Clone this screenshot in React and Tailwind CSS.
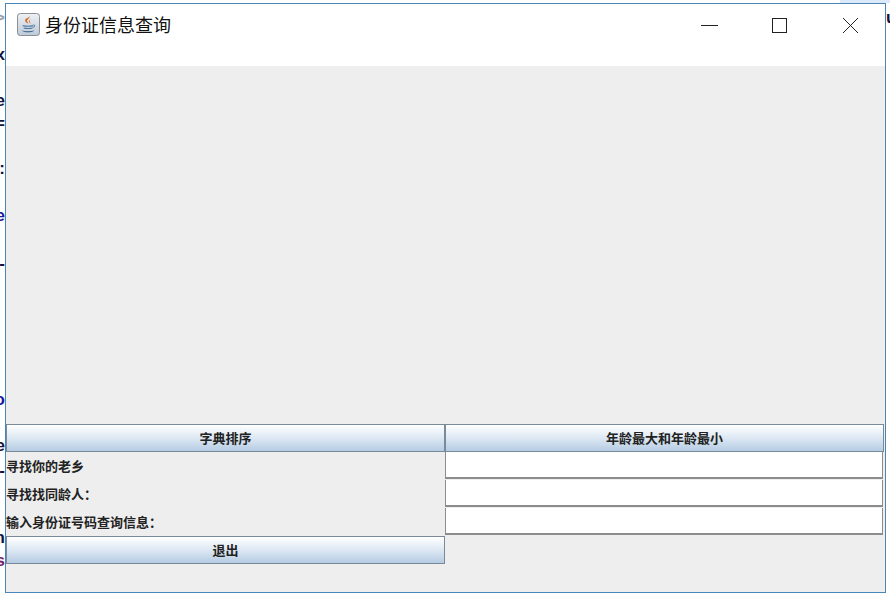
import React from 'react';

const font = { fontFamily: '"Noto Sans CJK SC", "Liberation Sans", sans-serif' };

// letters of the page behind the window, only a sliver of them shows
const behind = [
  ['>', 'top-[9px]', 'text-gray-400'],
  ['x', 'top-[46px]', 'text-[#14143c]'],
  ['e', 'top-[92px]', 'text-[#14143c]'],
  ['=', 'top-[115px]', 'text-[#14143c]'],
  [':', 'top-[160px]', 'text-[#14143c]'],
  ['e', 'top-[207px]', 'text-[#1a1aa0]'],
  ['-', 'top-[255px]', 'text-[#14143c]'],
  ['o', 'top-[391px]', 'text-[#1a1aa0]'],
  ['e', 'top-[437px]', 'text-[#14143c]'],
  ['-', 'top-[462px]', 'text-[#14143c]'],
  ['n', 'top-[529px]', 'text-[#14143c]'],
  ['s', 'top-[552px]', 'text-[#7a1a6a]'],
];

const JavaIcon = () => (
  <svg width="23" height="23" viewBox="0 0 24 24">
    <defs>
      <linearGradient id="tile" x1="0" y1="0" x2="0" y2="1">
        <stop offset="0" stopColor="#eef1f4" />
        <stop offset="1" stopColor="#bccad9" />
      </linearGradient>
    </defs>
    <rect x="0.5" y="0.5" width="23" height="23" rx="3" fill="url(#tile)" stroke="#85898e" />
    <path d="M13 3c1.200 2-3 3.400-2.400 5.600.3 1 1 1.600 1.400 2.600-3-1.400-4.200-3-3.200-4.800C10 5 13.200 4.600 13 3z" fill="#d4682a" />
    <path d="M16 5.500c-1.800.9-3 1.800-2.500 3.300.2.800.6 1.300.8 2.200-1.500-.8-2.400-1.900-1.700-3.200C13.200 6.800 14.800 6.200 16 5.500z" fill="#e58a46" />
    <path d="M6 12.500c3 .9 8.500.9 11 0v1.200c-2.500.9-8 .9-11 0z" fill="#4f789f" />
    <path d="M7 15c2.500.7 7 .7 9 0v1.200c-2 .7-6.500.7-9 0z" fill="#4f789f" />
    <path d="M5 18c3 1.300 10 1.300 13 0-1.500 2.800-11 2.800-13 0z" fill="#355c84" />
    <path d="M17 12.500c2.200-.4 2.400 2-.8 2.800" fill="none" stroke="#4f789f" />
  </svg>
);

const GridButton = ({ children }) => (
  <button className="h-[28px] w-full pb-[2px] border border-[#7a8a99] bg-gradient-to-b from-white via-[#dde8f3] to-[#b5cce3] text-[13px] leading-none font-bold text-[#222222]">
    {children}
  </button>
);

const GridLabel = ({ children }) => (
  <div className="h-[28px] pb-[1px] flex items-center text-[13px] font-bold text-[#222222] whitespace-nowrap">{children}</div>
);

const GridInput = () => (
  <div className="h-[28px] pr-[1px] pb-[1px]">
    <input type="text" className="block h-full w-full border-x border-b-2 border-[#8c8c8c] bg-white outline-none" />
  </div>
);

export default function App() {
  return (
    <div className="relative w-[890px] h-[596px] bg-white flex overflow-hidden" style={font}>
      <div className="absolute top-0 right-0 w-[50px] h-[3px] bg-[#dbeafa]" />

      <div className="relative w-[5px] h-full overflow-hidden shrink-0">
        {behind.map(([ch, top, color], i) => (
          <span key={i} className={`absolute right-0 ${top} ${color} text-[17px] leading-[18px] font-bold`} style={{ fontFamily: '"Liberation Sans", sans-serif' }}>
            {ch}
          </span>
        ))}
      </div>

      <div className="mt-[3px] w-[881px] h-[590px] border border-[#4a86b8] bg-[#eeeeee] flex flex-col shrink-0">
        <div className="h-[62px] bg-white flex items-start justify-between pt-[8px] pl-[11px] shrink-0">
          <div className="flex items-center gap-[5px]">
            <JavaIcon />
            <span className="text-[18px] leading-[24px] text-[#111111]">身份证信息查询</span>
          </div>
          <div className="flex items-center gap-[54px] pr-[26px] pt-[5px]">
            <svg width="17" height="16" viewBox="0 0 17 16"><path d="M0 7.500h17" stroke="#222" /></svg>
            <svg width="16" height="16" viewBox="0 0 16 16"><rect x="0.500" y="0.500" width="14" height="14" fill="none" stroke="#222" /></svg>
            <svg width="17" height="17" viewBox="0 0 17 17"><path d="M1 1l15 15M16 1L1 16" stroke="#222" /></svg>
          </div>
        </div>

        <div className="flex-1" />

        <div className="grid grid-cols-[439px_439px] pb-[28px]">
          <GridButton>字典排序</GridButton>
          <GridButton>年龄最大和年龄最小</GridButton>
          <GridLabel>寻找你的老乡</GridLabel>
          <GridInput />
          <GridLabel>寻找找同龄人：</GridLabel>
          <GridInput />
          <GridLabel>输入身份证号码查询信息：</GridLabel>
          <GridInput />
          <GridButton>退出</GridButton>
        </div>
      </div>

      <div className="relative flex-1 overflow-hidden">
        <span className="absolute left-0 top-[9px] text-[17px] leading-[18px] font-bold text-[#14143c]" style={{ fontFamily: '"Liberation Sans", sans-serif' }}>u</span>
      </div>
    </div>
  );
}
